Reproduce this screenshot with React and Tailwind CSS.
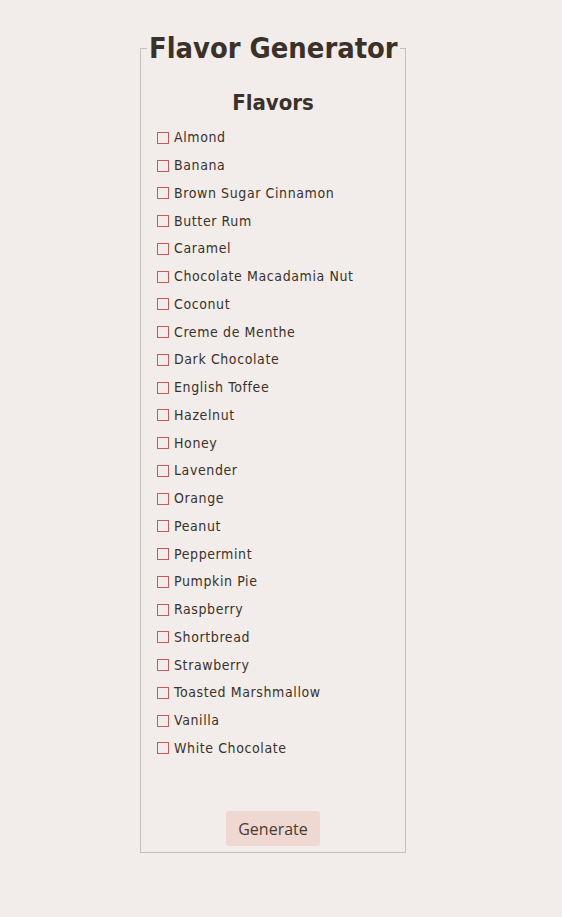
const flavors = [
  "Almond",
  "Banana",
  "Brown Sugar Cinnamon",
  "Butter Rum",
  "Caramel",
  "Chocolate Macadamia Nut",
  "Coconut",
  "Creme de Menthe",
  "Dark Chocolate",
  "English Toffee",
  "Hazelnut",
  "Honey",
  "Lavender",
  "Orange",
  "Peanut",
  "Peppermint",
  "Pumpkin Pie",
  "Raspberry",
  "Shortbread",
  "Strawberry",
  "Toasted Marshmallow",
  "Vanilla",
  "White Chocolate",
];

export default function App() {
  return (
    <div className="min-h-[917px] bg-[#f2edea] pr-4 pt-[30px] font-['DejaVu_Sans_Condensed','DejaVu_Sans',sans-serif] text-[#3b3129]">
      <div className="flex justify-center">
        <fieldset className="w-[266px] min-w-0 border border-[#c4c0bd] px-[6px] pb-[6px]">
          <legend className="mx-auto whitespace-nowrap px-[2px] text-[28.8px] font-bold leading-[36px]">
            Flavor Generator
          </legend>
          <h2 className="mt-[22px] text-center text-[22px] font-bold leading-[30px]">
            Flavors
          </h2>
          <ul className="mt-[6px] flex flex-col px-[10px]">
            {flavors.map((f) => (
              <li key={f} className="flex h-[27.75px] items-center gap-[5px] text-[14px] tracking-[0.6px]">
                <span className="block h-[12px] w-[12px] border border-[#c9585a] bg-transparent" />
                <span>{f}</span>
              </li>
            ))}
          </ul>
          <div className="mt-[49px] flex justify-center">
            <button className="h-[35px] rounded-[3px] bg-[#f0d8d2] px-3 font-['Open_Sans',sans-serif] text-[16px] text-[#4a3b31]">
              Generate
            </button>
          </div>
        </fieldset>
      </div>
    </div>
  );
}
